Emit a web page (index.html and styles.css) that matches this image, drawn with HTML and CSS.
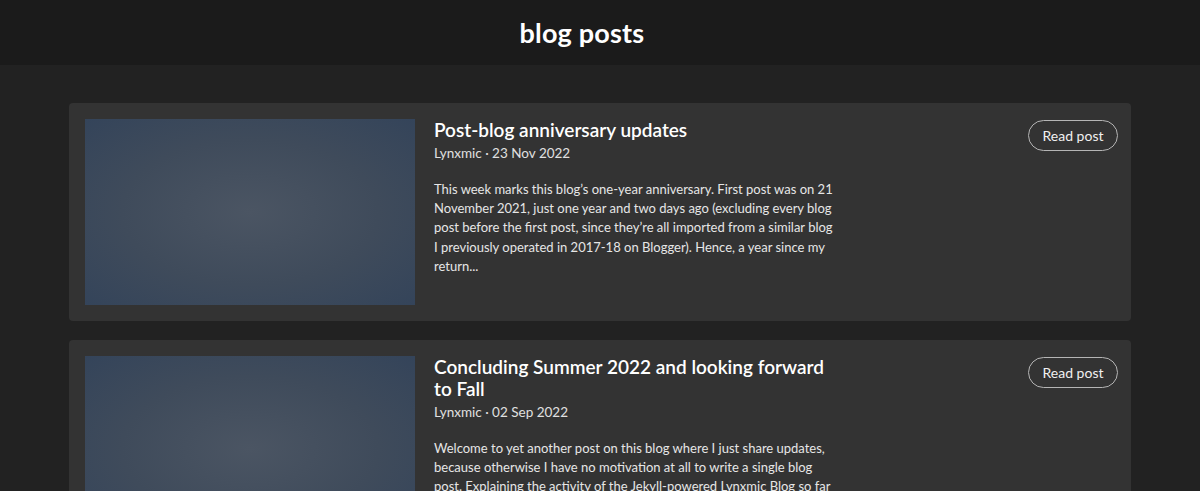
FILE: index.html
```html
<!DOCTYPE html>
<html>
<head>
<meta charset="utf-8">
<link rel="stylesheet" href="styles.css">
</head>
<body>
<header class="top">
  <h1 class="top-title">blog posts</h1>
</header>
<main class="posts">
  <article class="card">
    <div class="thumb"></div>
    <div class="info">
      <h2 class="title">Post-blog anniversary updates</h2>
      <div class="meta">Lynxmic · 23 Nov 2022</div>
      <p class="excerpt">This week marks this blog’s one-year anniversary. First post was on 21 November 2021, just one year and two days ago (excluding every blog post before the first post, since they’re all imported from a similar blog I previously operated in 2017-18 on Blogger). Hence, a year since my return...</p>
    </div>
    <a class="btn">Read post</a>
  </article>
  <article class="card">
    <div class="thumb"></div>
    <div class="info">
      <h2 class="title">Concluding Summer 2022 and looking forward to Fall</h2>
      <div class="meta">Lynxmic · 02 Sep 2022</div>
      <p class="excerpt">Welcome to yet another post on this blog where I just share updates, because otherwise I have no motivation at all to write a single blog post. Explaining the activity of the Jekyll-powered Lynxmic Blog so far this year, and what is coming next for the blog this fall...</p>
    </div>
    <a class="btn">Read post</a>
  </article>
</main>
</body>
</html>
```
FILE: styles.css
```css
html, body {
  margin: 0;
  padding: 0;
  background: #222222;
  color: #e8e8e8;
  font-family: "Lato", "Noto Sans", sans-serif;
}
.top {
  height: 65px;
  background: #1b1b1b;
  display: flex;
  align-items: center;
  justify-content: center;
  padding-right: 36px;
}
.top-title {
  margin: 0;
  font-family: "Lato", sans-serif;
  font-weight: 700;
  font-size: 27px;
  color: #ffffff;
  letter-spacing: 0.2px;
}
.posts {
  padding: 38px 69px 0 69px;
  display: flex;
  flex-direction: column;
  gap: 19px;
}
.card {
  background: #333333;
  border-radius: 4px;
  padding: 16px 13px 16px 16px;
  display: flex;
  align-items: flex-start;
  min-height: 186px;
}
.thumb {
  width: 330px;
  height: 186px;
  flex: none;
  background: radial-gradient(ellipse at center, #4b5563 0%, #3f4b5b 55%, #34445a 100%);
}
.info {
  width: 400px;
  margin-left: 19px;
  flex: none;
}
.title {
  margin: 0;
  font-size: 19px;
  font-weight: 600;
  line-height: 22px;
  color: #ffffff;
}
.meta {
  font-size: 13.5px;
  color: #e0e0e0;
  margin-top: 3px;
  line-height: 18px;
}
.excerpt {
  margin: 18px 0 0 0;
  font-size: 13px;
  line-height: 19.2px;
  color: #e6e6e6;
}
.btn {
  margin-left: auto;
  margin-top: 1px;
  height: 31px;
  width: 90px;
  box-sizing: border-box;
  border: 1px solid #b5b5b5;
  border-radius: 16px;
  display: flex;
  align-items: center;
  justify-content: center;
  font-size: 14px;
  color: #f0f0f0;
}
```
